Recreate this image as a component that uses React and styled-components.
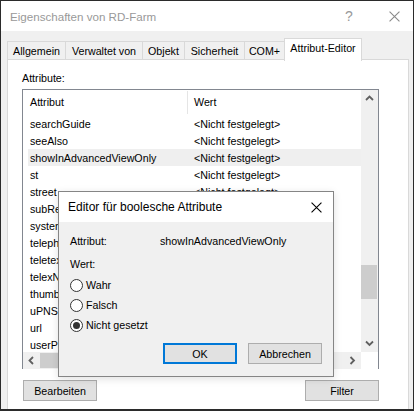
import React from "react";
import styled, { createGlobalStyle } from "styled-components";

const GlobalStyle = createGlobalStyle`
  html, body {
    margin: 0;
    padding: 0;
    background: #ffffff;
  }
  * {
    box-sizing: border-box;
  }
`;

const rows = [
  "searchGuide",
  "seeAlso",
  "showInAdvancedViewOnly",
  "st",
  "street",
  "subRefs",
  "systemFlags",
  "telephoneNumber",
  "teletexTerminalIdentifier",
  "telexNumber",
  "thumbnailPhoto",
  "uPNSuffixes",
  "url",
  "userParameters",
];

const tabs = [
  { label: "Allgemein", width: 59 },
  { label: "Verwaltet von", width: 78 },
  { label: "Objekt", width: 43 },
  { label: "Sicherheit", width: 61 },
  { label: "COM+", width: 41 },
  { label: "Attribut-Editor", width: 78, active: true },
];

const Window = styled.div`
  position: relative;
  width: 414px;
  height: 411px;
  border: 1px solid #2b2b2b;
  border-bottom-width: 2px;
  background: #f0f0f0;
  display: flex;
  flex-direction: column;
  font-family: "Liberation Sans", Arial, sans-serif;
  font-size: 10.7px;
  color: #000;
  overflow: hidden;
`;

const TitleBar = styled.div`
  height: 30px;
  background: #ffffff;
  display: flex;
  align-items: center;
  padding-left: 9px;
  flex-shrink: 0;
`;

const TitleText = styled.div`
  flex: 1;
  font-size: 11.6px;
  color: #999999;
`;

const TitleButton = styled.div`
  width: 38px;
  height: 30px;
  margin-right: ${({ $gap }) => ($gap ? "7px" : "0")};
  display: flex;
  align-items: center;
  justify-content: center;
  color: #999999;
  font-size: 14px;
`;

const Body = styled.div`
  flex: 1;
  display: flex;
  flex-direction: column;
  padding: 7px 4px 0 6px;
`;

const TabStrip = styled.div`
  display: flex;
  align-items: flex-end;
  height: 22px;
  position: relative;
  z-index: 1;
`;

const Tab = styled.div`
  width: ${({ $w }) => $w}px;
  height: ${({ $active }) => ($active ? "23px" : "19px")};
  margin-right: -1px;
  margin-bottom: ${({ $active }) => ($active ? "-1px" : "0")};
  border: 1px solid #d9d9d9;
  border-bottom: ${({ $active }) => ($active ? "none" : "1px solid #d9d9d9")};
  background: ${({ $active }) => ($active ? "#ffffff" : "#f0f0f0")};
  display: flex;
  align-items: ${({ $active }) => ($active ? "flex-start" : "center")};
  padding-top: ${({ $active }) => ($active ? "3px" : "0")};
  justify-content: center;
  white-space: nowrap;
`;

const Panel = styled.div`
  flex: 1;
  margin-top: -1px;
  border: 1px solid #d9d9d9;
  border-bottom: none;
  background: #ffffff;
  padding: 11px 29px 0 14px;
  display: flex;
  flex-direction: column;
`;

const Label = styled.div`
  height: 14px;
  line-height: 14px;
  margin-bottom: 4px;
`;

const ListBox = styled.div`
  height: 280px;
  border: 1px solid #828790;
  display: grid;
  grid-template-columns: 338px 17px;
  grid-template-rows: 262px 17px;
`;

const ListMain = styled.div`
  overflow: hidden;
  display: flex;
  flex-direction: column;
`;

const Header = styled.div`
  height: 25px;
  display: grid;
  grid-template-columns: 164px 1fr;
  align-items: center;
  flex-shrink: 0;
`;

const HeaderCell = styled.div`
  height: 23px;
  line-height: 23px;
  border-left: ${({ $sep }) => ($sep ? "1px solid #e5e5e5" : "none")};
  padding-left: ${({ $sep }) => ($sep ? "6px" : "7px")};
`;

const Row = styled.div`
  height: 17px;
  flex-shrink: 0;
  margin-left: 5px;
  padding-left: 2px;
  display: grid;
  grid-template-columns: 157px 1fr;
  align-items: center;
  background: ${({ $hl }) => ($hl ? "#efefef" : "transparent")};
  white-space: nowrap;
`;

const ValueCell = styled.div`
  padding-left: 7px;
`;

const VScroll = styled.div`
  background: #f0f0f0;
  display: flex;
  flex-direction: column;
`;

const HScroll = styled.div`
  background: #f0f0f0;
  display: flex;
`;

const Corner = styled.div`
  background: #ffffff;
`;

const ArrowBox = styled.div`
  width: 17px;
  height: 17px;
  flex-shrink: 0;
  display: flex;
  align-items: center;
  justify-content: center;
`;

const Track = styled.div`
  flex: 1;
`;

const VThumb = styled.div`
  margin-top: ${({ $top }) => $top}px;
  width: 16px;
  height: 34px;
  background: #cdcdcd;
`;

const HThumb = styled.div`
  margin-top: 1px;
  width: ${({ $w }) => $w}px;
  height: 15px;
  background: #cdcdcd;
`;

const ButtonRow = styled.div`
  display: flex;
  justify-content: space-between;
  margin-top: 11px;
  padding-left: 1px;
`;

const Button = styled.div`
  width: 74px;
  height: 21px;
  border: ${({ $focus }) => ($focus ? "2px solid #0078d7" : "1px solid #adadad")};
  background: #e1e1e1;
  display: flex;
  align-items: center;
  justify-content: center;
`;

const Dialog = styled.div`
  position: absolute;
  left: 57px;
  top: 190px;
  width: 276px;
  height: 186px;
  border: 1px solid #858585;
  background: #f0f0f0;
  box-shadow: 0 2px 8px rgba(0, 0, 0, 0.12);
  display: flex;
  flex-direction: column;
  z-index: 5;
`;

const DialogTitle = styled.div`
  height: 30px;
  background: #ffffff;
  display: flex;
  align-items: center;
  padding-left: 9px;
  font-size: 12px;
  flex-shrink: 0;
`;

const DialogTitleText = styled.div`
  flex: 1;
`;

const CloseBox = styled.div`
  width: 34px;
  height: 30px;
  display: flex;
  align-items: center;
  justify-content: center;
`;

const DialogBody = styled.div`
  flex: 1;
  padding: 12px 11px 0 11px;
  display: flex;
  flex-direction: column;
`;

const InfoRow = styled.div`
  display: grid;
  grid-template-columns: 90px 1fr;
  height: 14px;
  line-height: 14px;
`;

const WertLabel = styled.div`
  height: 14px;
  line-height: 14px;
  margin-top: 9px;
  margin-bottom: 4px;
`;

const RadioRow = styled.div`
  height: 20px;
  display: flex;
  align-items: center;
  gap: 3px;
`;

const RadioCircle = styled.div`
  width: 13px;
  height: 13px;
  border-radius: 50%;
  border: 1px solid #333333;
  background: #ffffff;
  display: flex;
  align-items: center;
  justify-content: center;
  &::after {
    content: "";
    display: ${({ $checked }) => ($checked ? "block" : "none")};
    width: 7px;
    height: 7px;
    border-radius: 50%;
    background: #333333;
  }
`;

const DialogButtons = styled.div`
  display: flex;
  justify-content: flex-end;
  gap: 11px;
  margin-top: 8px;
`;

const Chevron = ({ dir }) => {
  const paths = {
    up: "M1 5 L4.5 1.5 L8 5",
    down: "M1 1.5 L4.5 5 L8 1.5",
    left: "M5 1 L1.5 4.5 L5 8",
    right: "M1.5 1 L5 4.5 L1.5 8",
  };
  const vertical = dir === "up" || dir === "down";
  return (
    <svg width={vertical ? 9 : 7} height={vertical ? 7 : 9} viewBox={vertical ? "0 0 9 7" : "0 0 7 9"}>
      <path d={paths[dir]} fill="none" stroke="#606060" strokeWidth="1.8" />
    </svg>
  );
};

const CrossIcon = ({ size, color }) => (
  <svg width={size} height={size} viewBox="0 0 10 10">
    <path d="M0.5 0.5 L9.5 9.5 M9.5 0.5 L0.5 9.5" stroke={color} strokeWidth="1" />
  </svg>
);

const App = () => {
  return (
    <>
      <GlobalStyle />
      <Window>
        <TitleBar>
          <TitleText>Eigenschaften von RD-Farm</TitleText>
          <TitleButton $gap>?</TitleButton>
          <TitleButton>
            <CrossIcon size={11} color="#8a8a8a" />
          </TitleButton>
        </TitleBar>
        <Body>
          <TabStrip>
            {tabs.map((t) => (
              <Tab key={t.label} $w={t.width} $active={t.active}>
                {t.label}
              </Tab>
            ))}
          </TabStrip>
          <Panel>
            <Label>Attribute:</Label>
            <ListBox>
              <ListMain>
                <Header>
                  <HeaderCell>Attribut</HeaderCell>
                  <HeaderCell $sep>Wert</HeaderCell>
                </Header>
                {rows.map((r) => (
                  <Row key={r} $hl={r === "showInAdvancedViewOnly"}>
                    <div>{r}</div>
                    <ValueCell>&lt;Nicht festgelegt&gt;</ValueCell>
                  </Row>
                ))}
              </ListMain>
              <VScroll>
                <ArrowBox>
                  <Chevron dir="up" />
                </ArrowBox>
                <Track>
                  <VThumb $top={158} />
                </Track>
                <ArrowBox>
                  <Chevron dir="down" />
                </ArrowBox>
              </VScroll>
              <HScroll>
                <ArrowBox>
                  <Chevron dir="left" />
                </ArrowBox>
                <Track>
                  <HThumb $w={170} />
                </Track>
                <ArrowBox>
                  <Chevron dir="right" />
                </ArrowBox>
              </HScroll>
              <Corner />
            </ListBox>
            <ButtonRow>
              <Button>Bearbeiten</Button>
              <Button>Filter</Button>
            </ButtonRow>
          </Panel>
        </Body>

        <Dialog>
          <DialogTitle>
            <DialogTitleText>Editor für boolesche Attribute</DialogTitleText>
            <CloseBox>
              <CrossIcon size={11} color="#000000" />
            </CloseBox>
          </DialogTitle>
          <DialogBody>
            <InfoRow>
              <div>Attribut:</div>
              <div>showInAdvancedViewOnly</div>
            </InfoRow>
            <WertLabel>Wert:</WertLabel>
            <RadioRow>
              <RadioCircle />
              Wahr
            </RadioRow>
            <RadioRow>
              <RadioCircle />
              Falsch
            </RadioRow>
            <RadioRow>
              <RadioCircle $checked />
              Nicht gesetzt
            </RadioRow>
            <DialogButtons>
              <Button $focus>OK</Button>
              <Button>Abbrechen</Button>
            </DialogButtons>
          </DialogBody>
        </Dialog>
      </Window>
    </>
  );
};

export default App;
